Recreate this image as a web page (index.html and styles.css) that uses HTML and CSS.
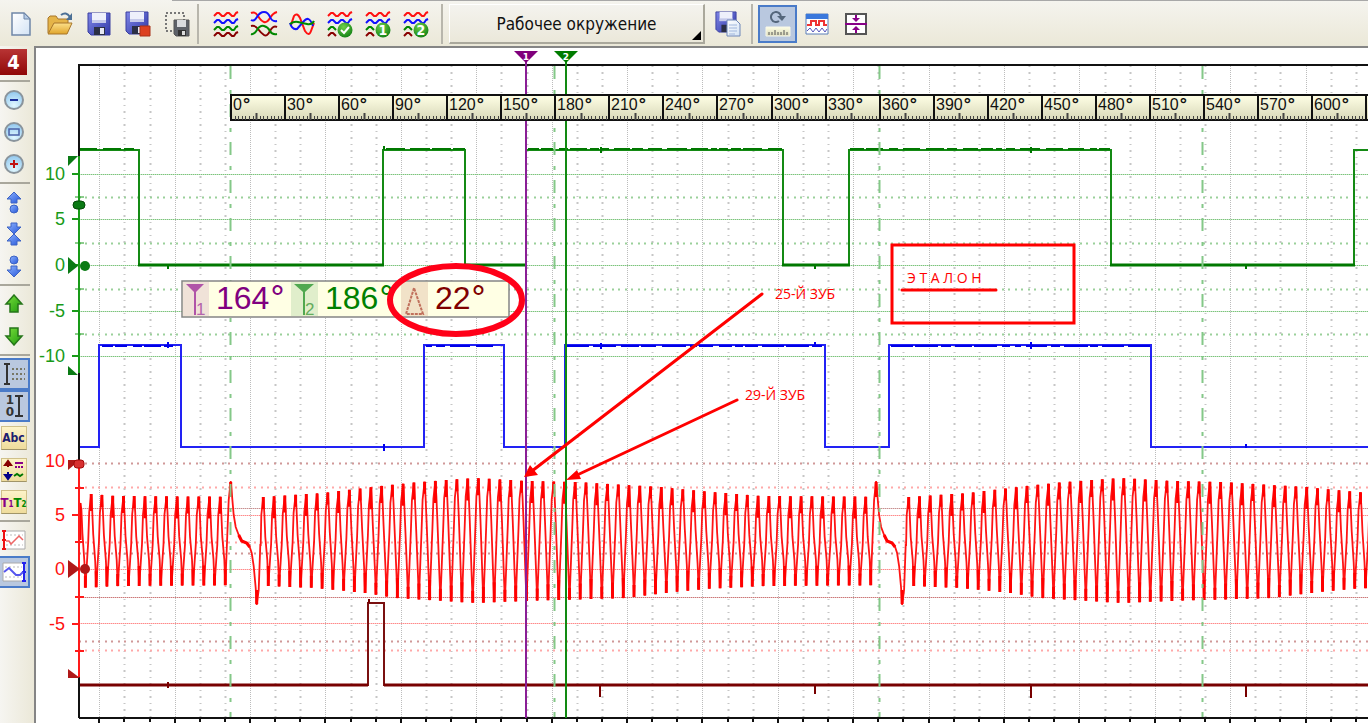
FILE: index.html
```html
<!DOCTYPE html>
<html lang="ru">
<head>
<meta charset="utf-8">
<title>Осциллограф</title>
<link rel="stylesheet" href="styles.css">
</head>
<body>
<svg class="defs" aria-hidden="true">
  <defs>
    <linearGradient id="disk" x1="0" y1="0" x2="1" y2="1"><stop offset="0" stop-color="#7f86e6"/><stop offset="1" stop-color="#3038a8"/></linearGradient>
    <linearGradient id="folder" x1="0" y1="0" x2="0" y2="1"><stop offset="0" stop-color="#fde08a"/><stop offset="1" stop-color="#e0a52c"/></linearGradient>
    <linearGradient id="page" x1="0" y1="0" x2="1" y2="1"><stop offset="0" stop-color="#fff"/><stop offset="1" stop-color="#d3e3f5"/></linearGradient>
    <linearGradient id="ruler" x1="0" y1="0" x2="0" y2="1"><stop offset="0" stop-color="#ffffe6"/><stop offset="1" stop-color="#d8d8b8"/></linearGradient>
    <radialGradient id="ball" cx=".4" cy=".3" r=".8"><stop offset="0" stop-color="#6fd04a"/><stop offset="1" stop-color="#0a7a10"/></radialGradient>
    <radialGradient id="glass" cx=".5" cy=".8" r=".8"><stop offset="0" stop-color="#e2f8ff"/><stop offset="1" stop-color="#8fc6ee"/></radialGradient>
    <linearGradient id="blueFill" x1="0" y1="0" x2="1" y2="1"><stop offset="0" stop-color="#8fb4ff"/><stop offset="1" stop-color="#2455d8"/></linearGradient>
    <linearGradient id="greenFill" x1="0" y1="0" x2="1" y2="1"><stop offset="0" stop-color="#7be03c"/><stop offset="1" stop-color="#1f9a10"/></linearGradient>
    <symbol id="floppy" viewBox="0 0 24 24">
      <path d="M1 1h22v22H4l-3-3z" fill="url(#disk)" stroke="#3a3fa0"/>
      <path d="M5 1h14v10H5z" fill="#eef0fb"/><path d="M5 8h14v3H5z" fill="#c5c9ea"/>
      <path d="M7 15h11v8H7z" fill="#2b2f45"/><path d="M13 16h4v6h-4z" fill="#e6e8f2"/>
    </symbol>
    <symbol id="w" viewBox="0 0 26 6"><path d="M1 5l3-3h2l3 3h2l3-3h2l3 3h2l2-3 2-1" fill="none" stroke="currentColor" stroke-width="2" stroke-linejoin="round"/></symbol>
    <symbol id="half" viewBox="0 0 26 6"><path d="M1 5l3-3h2l3 3" fill="none" stroke="currentColor" stroke-width="2" stroke-linejoin="round"/></symbol>
    <symbol id="rows" viewBox="0 0 26 28">
      <use href="#w" y="1" width="26" height="6" color="#f11"/><use href="#w" y="8" width="26" height="6" color="#11f"/>
      <use href="#half" y="15" width="26" height="6" color="#080"/><use href="#half" y="21" width="26" height="6" color="#800"/>
      <circle cx="18" cy="20" r="7.500" fill="url(#ball)"/>
    </symbol>
  </defs>
</svg>

<header class="toolbar">
  <div class="group group-file">
    <button class="tool" aria-label="Новый"><svg width="26" height="26" viewBox="0 0 26 26"><path d="M4 2h12l6 6v16H4z" fill="url(#page)" stroke="#6f87a8" stroke-width="1.500"/><path d="M16 2v6h6z" fill="#b5cbe6" stroke="#6f87a8"/></svg></button>
    <button class="tool" aria-label="Открыть"><svg width="28" height="26" viewBox="0 0 28 26"><path d="M2 22V7l2-2h6l2 3h10v4" fill="#e5b448" stroke="#a8762a"/><path d="M2 23l6-11h18l-5 11z" fill="url(#folder)" stroke="#a8762a"/><path d="M15 4q5-4 9 2" fill="none" stroke="#4c7096" stroke-width="2"/><path d="M26 2v7h-6z" fill="#4c7096"/></svg></button>
    <button class="tool" aria-label="Сохранить"><svg width="24" height="24"><use href="#floppy" width="24" height="24"/></svg></button>
    <button class="tool" aria-label="Сохранить и закрыть"><svg width="26" height="26"><use href="#floppy" width="24" height="24"/><path d="M15 15h10v10H15z" fill="#dc4020" stroke="#a83018"/></svg></button>
    <button class="tool" aria-label="Сохранить выделенное"><svg width="26" height="26" viewBox="0 0 26 26"><path d="M2 2h18v18H2z" fill="none" stroke="#777" stroke-width="2" stroke-dasharray="2 2"/><path d="M10 9h15v16H12l-2-2z" fill="#5d6168" stroke="#555"/><path d="M13 9h9v7h-9z" fill="#d9dbde"/><path d="M14 19h8v6h-8z" fill="#333"/><path d="M18 20h3v4h-3z" fill="#ddd"/></svg></button>
  </div>
  <div class="group group-waves">
    <button class="tool" aria-label="Раздельно"><svg width="26" height="28"><use href="#w" y="1" width="26" height="6" color="#f11"/><use href="#w" y="8" width="26" height="6" color="#11f"/><use href="#w" y="15" width="26" height="6" color="#080"/><use href="#w" y="21" width="26" height="6" color="#800"/></svg></button>
    <button class="tool" aria-label="Попарно"><svg width="28" height="28" viewBox="0 0 28 28" fill="none" stroke-width="2"><path d="M1 3q4-2 7 3t6 6 6-4 7-6" stroke="#f11"/><path d="M1 10q3 2 6-3t7-5 6 5 7 4" stroke="#11f"/><path d="M1 16q4-1 7 3t6 6 6-4 7-4" stroke="#800"/><path d="M1 24q3 1 6-4t7-4 6 5 7 3" stroke="#080"/></svg></button>
    <button class="tool" aria-label="Вместе"><svg width="26" height="26" viewBox="0 0 26 26" fill="none" stroke-width="2"><path d="M2 14l3-9q3-4 6 2l5 13q4 6 6 0l3-8" stroke="#f11"/><path d="M1 12q2 7 7 6l7-8q5-6 9 5" stroke="#11f"/><path d="M1 13q4-3 8-2t9 2 7-3" stroke="#080"/></svg></button>
    <button class="tool" aria-label="Применить"><svg width="26" height="28"><use href="#rows" width="26" height="28"/><path d="M14 20l3 3 5-6" fill="none" stroke="#fff" stroke-width="2"/></svg></button>
    <button class="tool" aria-label="Набор 1"><svg width="26" height="28"><use href="#rows" width="26" height="28"/><text class="ball-num" x="18" y="25">1</text></svg></button>
    <button class="tool" aria-label="Набор 2"><svg width="26" height="28"><use href="#rows" width="26" height="28"/><text class="ball-num" x="18" y="25">2</text></svg></button>
  </div>
  <label class="workspace"><select aria-label="Окружение"><option>Рабочее окружение</option></select></label>
  <div class="group group-save">
    <button class="tool" aria-label="Сохранить окружение"><svg width="28" height="28"><use href="#floppy" x="1" y="1" width="22" height="22"/><path d="M13 10h9l4 4v12H13z" fill="url(#page)" stroke="#6f87b8"/><path d="M15 15h8M15 18h8M15 21h8M15 24h6" stroke="#9fb6dc"/></svg></button>
  </div>
  <div class="group group-view">
    <button class="tool active" aria-pressed="true" aria-label="Линейка"><svg width="26" height="26" viewBox="0 0 26 26"><path d="M14 10A5 5 0 1 1 16 6" fill="none" stroke="#55677c" stroke-width="2"/><path d="M12 5h9l-4 5z" fill="#55677c"/><path d="M1 16h24v9H1z" fill="url(#ruler)" stroke="#f8f8e8"/><path d="M4 24v-3M7 24v-3M10 24v-5M13 24v-3M16 24v-3M19 24v-5M22 24v-3" stroke="#555"/></svg></button>
    <button class="tool" aria-label="Панель"><svg width="24" height="24" viewBox="0 0 24 24"><path d="M1 2h22v20H1z" fill="#fff" stroke="#5b7fb8"/><path d="M1 2h22v5H1z" fill="#3a78dc"/><path d="M2 13h4V9h5v4h3V9h5v4h3" fill="none" stroke="#e33" stroke-width="2"/><path d="M2 19l3-3 3 4 3-4 3 4 3-4 3 4 2-3" fill="none" stroke="#55b"/></svg></button>
    <button class="tool" aria-label="Сжать"><svg width="24" height="24" viewBox="0 0 24 24"><path d="M2 2h20v20H2z" fill="#fff" stroke="#555" stroke-width="2"/><path d="M1 12h22" stroke="#808" stroke-width="2"/><path d="M12 3v6M12 15v6" stroke="#808" stroke-width="2"/><path d="M8 6h8l-4 4zM8 18h8l-4-4z" fill="#808"/></svg></button>
  </div>
</header>

<main class="workspace-body">
  <nav class="side" aria-label="Инструменты">
    <button class="side-tool"><span class="channel">4</span></button>
    <hr>
    <button class="side-tool" aria-label="Уменьшить"><svg width="22" height="22" viewBox="0 0 22 22"><circle cx="11" cy="11" r="9" fill="url(#glass)" stroke="#8a949c" stroke-width="2"/><path d="M7 11h8" stroke="#1a2f9a" stroke-width="2"/></svg></button>
    <button class="side-tool" aria-label="По размеру"><svg width="22" height="22" viewBox="0 0 22 22"><circle cx="11" cy="11" r="9" fill="url(#glass)" stroke="#8a949c" stroke-width="2"/><path d="M6 8h10v6H6z" fill="none" stroke="#4a62a8" stroke-width="1.500"/></svg></button>
    <button class="side-tool" aria-label="Увеличить"><svg width="22" height="22" viewBox="0 0 22 22"><circle cx="11" cy="11" r="9" fill="url(#glass)" stroke="#8a949c" stroke-width="2"/><path d="M7 11h8M11 7v8" stroke="#c01414" stroke-width="2"/></svg></button>
    <hr>
    <button class="side-tool" aria-label="Вверх"><svg width="16" height="24" viewBox="0 0 16 24" fill="url(#blueFill)" stroke="#3c62c4"><path d="M8 2l7 7h-4v4H5V9H1z"/><circle cx="8" cy="19" r="4"/></svg></button>
    <button class="side-tool" aria-label="К центру"><svg width="16" height="24" viewBox="0 0 16 24" fill="url(#blueFill)" stroke="#3c62c4"><path d="M5 1h6v4h4l-7 7-7-7h4z"/><path d="M5 23h6v-4h4l-7-7-7 7h4z"/></svg></button>
    <button class="side-tool" aria-label="Вниз"><svg width="16" height="24" viewBox="0 0 16 24" fill="url(#blueFill)" stroke="#3c62c4"><path d="M8 23l7-7h-4v-4H5v4H1z"/><circle cx="8" cy="6" r="4"/></svg></button>
    <hr>
    <button class="side-tool" aria-label="Канал вверх"><svg width="20" height="20" viewBox="0 0 20 20"><path d="M10 1l8 9h-4v8H6v-8H2z" fill="url(#greenFill)" stroke="#26761a" stroke-width="1.500"/></svg></button>
    <button class="side-tool" aria-label="Канал вниз"><svg width="20" height="20" viewBox="0 0 20 20"><path d="M10 19l8-9h-4V2H6v8H2z" fill="url(#greenFill)" stroke="#26761a" stroke-width="1.500"/></svg></button>
    <hr>
    <button class="side-tool active" aria-pressed="true" aria-label="Сетка"><svg width="22" height="24" viewBox="0 0 22 24" fill="none"><path d="M1 2h6M1 22h6M4 2v20" stroke="#333" stroke-width="2"/><path d="M9 7h13M9 12h13M9 17h13" stroke="#776" stroke-width="2" stroke-dasharray="2 2"/></svg></button>
    <button class="side-tool active" aria-pressed="true" aria-label="Шкала"><svg width="20" height="24" viewBox="0 0 20 24"><path d="M11 2h8M11 22h8M15 2v20" stroke="#333" stroke-width="2"/><text class="scale-num" x="6" y="10">1</text><text class="scale-num" x="6" y="22">0</text></svg></button>
    <button class="side-tool"><span class="tile abc">Abc</span></button>
    <button class="side-tool" aria-label="Связь"><span class="tile"><svg width="22" height="22" viewBox="0 0 22 22"><path d="M5 2v6M2 6l3-4 3 4z" fill="#800" stroke="#800" stroke-width="2"/><path d="M5 13v6M2 16l3 4 3-4z" fill="#008" stroke="#008" stroke-width="2"/><path d="M12 4h8" stroke="#808" stroke-width="2"/><path d="M12 8h8" stroke="#808" stroke-width="2" stroke-dasharray="2 1"/><path d="M11 17l3-2 3 2 3-2" stroke="#070" stroke-width="2" fill="none"/></svg></span></button>
    <button class="side-tool"><span class="tile markers"><b>T<sub>1</sub></b><b>T<sub>2</sub></b></span></button>
    <hr>
    <button class="side-tool" aria-label="Левая шкала"><svg width="24" height="22" viewBox="0 0 24 22" fill="none"><path d="M2 2h21v18H2z" fill="#fff" stroke="#aaa"/><path d="M4 6h17M4 16h17" stroke="#bbb" stroke-dasharray="2 2"/><path d="M2 1v20M0 2h4M0 11h4M0 20h4" stroke="#e11" stroke-width="2"/><path d="M4 12h3l2 3 8-8 4 4" stroke="#e66" stroke-width="1.500"/></svg></button>
    <button class="side-tool active" aria-pressed="true" aria-label="Правая шкала"><svg width="24" height="22" viewBox="0 0 24 22" fill="none"><path d="M1 2h21v18H1z" fill="#fff" stroke="#aaa"/><path d="M3 6h17M3 16h17" stroke="#bbb" stroke-dasharray="2 2"/><path d="M22 1v20M20 2h4M20 11h4M20 20h4" stroke="#22e" stroke-width="2"/><path d="M2 11l5-4 7 7h4l3-3" stroke="#55e" stroke-width="2"/></svg></button>
  </nav>

  <section class="scope">
    <svg class="plot" role="img" aria-label="Осциллограмма">
      <g transform="translate(-36 -48)">
        <g id="grid"></g>
        <g id="traces"></g>
        <g id="frame"></g>
        <g id="cursors">
          <path d="M526 62V718" stroke="#8a1e96" stroke-width="2"/>
          <path d="M566 62V718" stroke="#128a12" stroke-width="2"/>
          <path d="M514 51h24l-12 12z" fill="#80007c"/><path d="M554 51h24l-12 12z" fill="#007c00"/>
          <text class="cursor-num" x="526" y="60">1</text><text class="cursor-num" x="566" y="60">2</text>
        </g>
        <g id="scale"></g>
        <g id="axes"></g>
        <g class="readout">
          <path d="M182 281H509V317H182z" fill="#ffffe4" stroke="#858585" stroke-width="1.500"/>
          <path d="M183 282h26v34h-26z" fill="#f0e2d8"/><path d="M291 282h27v34h-27z" fill="#e0eecb"/><path d="M401 282h27v34h-27z" fill="#f1e2c8"/>
          <path d="M186 284h18l-8 8v23h-2v-23z" fill="#b054a8"/><path d="M294 284h20l-9 8v23h-2v-23z" fill="#50a850"/>
          <path d="M414 288l-8 26h17z" fill="none" stroke="#c0705c" stroke-width="2" stroke-dasharray="3 1"/>
          <text class="sub" x="196" y="315" fill="#b464ac">1</text><text class="sub" x="305" y="315" fill="#64ac5c">2</text>
          <text class="val" x="216" y="309" fill="#800080">164<tspan>°</tspan></text><text class="val" x="325" y="309" fill="#008000">186<tspan>°</tspan></text><text class="val" x="435" y="309" fill="#800000">22<tspan>°</tspan></text>
        </g>
        <g fill="none" stroke="#f00" stroke-width="3" stroke-linecap="round">
          <ellipse cx="456" cy="300" rx="66" ry="34" stroke="#ff0018" stroke-width="6"/>
          <path d="M892 245H1074V323H892z"/><path d="M902 290H996"/>
          <path d="M762 294L532 471M737 400L575 476"/>
          <path d="M524 477l6-12 8 10zM566 480l11-10 4 9z" fill="#f00" stroke="none"/>
        </g>
        <g class="note"><text x="775" y="299">25-Й ЗУБ</text><text x="745" y="400">29-Й ЗУБ</text><text x="907" y="283" xml:space="preserve">Э Т А Л О Н</text></g>
      </g>
    </svg>
  </section>
</main>
<script src="plot.js"></script>
</body>
</html>
```

FILE: styles.css
```css
* { box-sizing: border-box; }

body {
  margin: 0;
  min-height: 100vh;
  display: flex;
  flex-direction: column;
  overflow: hidden;
  background: #ece9d8;
  font-family: "DejaVu Sans Condensed", "DejaVu Sans", sans-serif;
}

.defs { position: absolute; width: 0; height: 0; }

button {
  padding: 0;
  border: 0;
  background: none;
  font: inherit;
  display: flex;
  align-items: center;
  justify-content: center;
}

.toolbar {
  position: relative;
  display: flex;
  align-items: center;
  height: 46px;
  padding-top: 2px;
  background: linear-gradient(#f5f4ef, #ebe8d8);
}
.toolbar::before {
  content: "";
  position: absolute;
  top: 0;
  left: 172px;
  right: 0;
  height: 1px;
  background: #a8a8a8;
}

.group { display: flex; align-items: center; height: 40px; }
.group-file { padding: 0 1px; border-right: 2px solid #b8b6ac; }
.group-file .tool { width: 39px; }
.group-waves { padding: 0 6px 0 8px; border-right: 2px solid #b8b6ac; }
.group-save { padding: 0 4px; border-right: 2px solid #b8b6ac; }
.group-view { padding-left: 5px; }
.group-view .tool { width: 39px; }
.tool { width: 38px; height: 38px; }

.active { background: #b9c8df; border: 2px solid #4a7bc8; }

.workspace {
  position: relative;
  width: 256px;
  height: 40px;
  margin: 0 0 0 6px;
}
.workspace select {
  width: 100%;
  height: 100%;
  appearance: none;
  border: 1px solid #fff;
  border-right: 2px solid #aaa89c;
  border-bottom: 2px solid #aaa89c;
  border-radius: 0;
  background: linear-gradient(#f4f3ee, #ebe8da);
  font: 17px "DejaVu Sans Condensed", "DejaVu Sans", sans-serif;
  color: #111;
  text-align: center;
  text-align-last: center;
}
.workspace::after {
  content: "";
  position: absolute;
  right: 4px;
  bottom: 4px;
  border-left: 9px solid transparent;
  border-bottom: 9px solid #000;
}

.ball-num {
  font: bold 14px "DejaVu Sans Condensed", "DejaVu Sans", sans-serif;
  fill: #fff;
  text-anchor: middle;
}

.workspace-body { flex: 1; display: flex; min-height: 0; }

.side {
  width: 34px;
  padding: 0 4px 0 0;
  background: linear-gradient(90deg, #f6f5f1, #ebe8d8);
}
.side-tool { width: 30px; height: 32px; padding-right: 3px; }
.side-tool.active { border-left: 0; padding-right: 1px; }
.side hr { height: 2px; margin: 2px 0; border: 0; background: #a9a79c; }

.channel {
  width: 27px;
  height: 26px;
  line-height: 26px;
  background: linear-gradient(#b83434, #900808);
  color: #fff;
  font-size: 20px;
  font-weight: bold;
}
.scale-num { font: bold 12px "DejaVu Sans", sans-serif; fill: #333; text-anchor: middle; }

.tile {
  display: flex;
  align-items: center;
  justify-content: center;
  width: 26px;
  height: 24px;
  border: 1px solid #cfc08a;
  border-bottom-color: #a09468;
  background: linear-gradient(#fdf3c8, #efdc9c);
}
.abc { font-size: 12px; font-weight: bold; color: #1c2070; }
.markers { font: bold 13px "DejaVu Sans Condensed", sans-serif; color: #808; }
.markers b + b { color: #080; }
.markers sub { font-size: 8px; vertical-align: baseline; }

.scope {
  flex: 1;
  min-width: 0;
  display: flex;
  border-top: 2px solid #858585;
  border-left: 2px solid #858585;
  background: #fff;
}
.plot { flex: 1; min-width: 0; display: block; }

.axis-num { font: 18px "Liberation Sans", Arial, sans-serif; text-anchor: end; }
.deg { font: 16px "Liberation Sans", Arial, sans-serif; fill: #111; }
.deg tspan { font-size: 18px; font-weight: bold; }
.cursor-num { font: bold 9px "DejaVu Sans", sans-serif; fill: #fff; text-anchor: middle; }
.val { font: 32px "Liberation Sans", Arial, sans-serif; }
.val tspan { font-family: "DejaVu Sans", sans-serif; }
.sub { font: 17px "Liberation Sans", Arial, sans-serif; }
.note { font: 14px "Open Sans", "Noto Sans", sans-serif; fill: #f00; }
```

FILE: plot.js
```js
const RIGHT = Math.max(1368, window.innerWidth + 40);
const LEFT = 79;
const get = id => document.getElementById(id);

function path(d, stroke, width = 1, dash = '') {
  return `<path d="${d}" fill="none" stroke="${stroke}" stroke-width="${width}"${dash ? ` stroke-dasharray="${dash}"` : ''}/>`;
}

// Grid
const FINE = '1 1', COARSE = '2 4 2 5';
let grid = '', ticks = '';
for (let i = 0, x; (x = Math.round(99.3 + i * 25.13)) < RIGHT; i++) {
  const major = i % 3 === 0;
  grid += path(`M${x + .5} 66V718`, major ? '#bcbcbc' : '#c6c6c6', major ? 1 : 2, major ? FINE : '1 5 2 5');
  ticks += path(`M${x} 718V${major ? 724 : 722}`, '#111', 2);
}
const rows = [
  [174, '#7cc47c', 1], [197, '#9ad09a', 0], [219, '#7cc47c', 1], [243, '#9ad09a', 0],
  [265, '#7cc47c', 1], [289, '#9ad09a', 0], [311, '#7cc47c', 1], [334, '#9ad09a', 0], [356, '#7cc47c', 1],
  [463, '#d09898', 0], [487, '#ffa8a8', 0], [508, '#c89090', 1], [515, '#ff8a8a', 1], [542, '#ffa8a8', 0],
  [553, '#d09898', 0], [569, '#ff8a8a', 1], [597, '#cc7878', 1], [623, '#ff8a8a', 1],
  [641, '#d09898', 0], [650, '#ffa8a8', 0]
];
for (const [y, c, fine] of rows) {
  if (fine) grid += `<g opacity=".45">${path(`M${LEFT} ${y + .5}H${RIGHT}`, c, 1)}</g>`;
  grid += path(`M${LEFT} ${y + .5}H${RIGHT}`, c, fine ? 1 : 2, fine ? FINE : COARSE);
}
get('grid').innerHTML = grid;

// Rectangular traces: start level, then [x, level] transitions
function steps(start, list) {
  let d = `M${LEFT + 1} ${start}`;
  for (const [x, y] of list) d += `H${x}V${y}`;
  return d + `H${RIGHT}`;
}
function flats(start, list, thickLevel) {
  let d = '', x0 = LEFT + 1, y0 = start;
  for (const [x, y] of [...list, [RIGHT, 0]]) {
    if (y0 === thickLevel) d += `M${x0 - 1} ${y0}H${x + 1}`;
    x0 = x; y0 = y;
  }
  return d;
}
// Small deterministic noise along a flat section
function noise(from, to, y, seed) {
  let d = '', s = seed;
  for (let x = from; x < to - 8;) {
    s = (s * 73 + 41) % 211;
    const len = 6 + s % 19;
    d += `M${x} ${y}h${Math.min(len, to - x)}`;
    x += len + 2 + s % 5;
  }
  return d;
}
const green = [[139, 265], [383, 150], [465, 265], [526, 150], [783, 265], [849, 150], [1111, 265], [1354, 150]];
const blue = [[99, 345], [181, 447], [424, 345], [504, 447], [565, 345], [825, 447], [889, 345], [1151, 447]];
const brown = [[368, 603], [384, 685]];

let t = '';
t += path(steps(150, green), '#148a14', 2) + path(flats(150, green, 265), '#007800', 3);
t += path(noise(80, 139, 149, 3) + noise(386, 465, 149, 8) + noise(528, 782, 149, 5) + noise(850, 1110, 149, 9), '#007800', 2);
t += path('M384 150v-4M168 265v4M601 147v6M815 265v4M1031 147v6M1246 265v4', '#007800', 2);
t += path(steps(447, blue), '#2222f4', 2);
t += path(noise(102, 181, 346, 5) + noise(426, 503, 346, 6) + noise(567, 824, 346, 2) + noise(891, 1150, 346, 7), '#0000e8', 2);
t += path('M168 342v6M601 343v6M815 342v4M1031 342v7M384 444v7M1246 444v4', '#0000f0', 2);
t += path(steps(685, brown), '#7a1010', 2);
t += path('M80 685H368M384 685H' + RIGHT, '#780000', 3);
t += path('M168 682v6M369 603v-4M600 685v12M815 685v9M1031 685v13M1246 685v12', '#780000', 2);

// Crankshaft sensor trace, one revolution = 60 tooth pitches with 2 missing
const REV = 645.4, PITCH = REV / 60, SYNC = 230.7, FIRST = 263.3;
const TOP = [[0, 497], [60, 493], [117, 486], [157, 482], [212, 478], [263, 481], [312, 482], [397, 487], [437, 491], [497, 496], [REV, 497]];
const BOTTOM = [[0, 586], [47, 588], [97, 593], [127, 598], [207, 603], [257, 601], [357, 598], [397, 593], [437, 589], [497, 586], [REV, 585]];
function level(table, x) {
  const p = ((x - FIRST) % REV + REV) % REV;
  for (let i = 1; i < table.length; i++) {
    if (p <= table[i][0]) {
      const [a, b] = [table[i - 1], table[i]];
      return a[1] + (b[1] - a[1]) * (p - a[0]) / (b[0] - a[0]);
    }
  }
  return table[0][1];
}
const pts = [[80, 503]];
let caps = '';
const GAP = [[-2, 500], [0, 481], [1, 492], [3, 515], [5, 527], [8, 535], [11, 541], [16, 543], [19, 547], [21, 553], [23, 566], [25, 588], [26, 605], [28, 590], [30, 545]];
for (let r = -1; r < 3; r++) {
  const base = FIRST + r * REV;
  for (let k = 0; k < 57; k++) {
    const x = base + k * PITCH;
    if (x < 77 || x > RIGHT) continue;
    const hi = level(TOP, x), lo = level(BOTTOM, x);
    if (x > 84) {
      pts.push([x - 3, hi + 48], [x - 2, hi + 18], [x, hi]);
      caps += `M${x.toFixed(1)} ${hi.toFixed(1)}v${[12, 22, 17][k % 3]}`;
    }
    pts.push([x + 1, hi + 16], [x + 2, hi + 40], [x + 4, lo - 26], [x + 5, lo]);
    if (x > 78) caps += `M${(x + 5).toFixed(1)} ${lo.toFixed(1)}v-${[20, 12, 16][k % 3]}`;
  }
  const s = SYNC + (r + 1) * REV;
  if (s < RIGHT) {
    for (const [dx, y] of GAP) pts.push([s + dx, y]);
    caps += `M${s} 482v15M${s + 26} 604v-14`;
    caps += `M${s + 8} 535l3 6 5 2 3 4`;
  }
}
pts.sort((a, b) => a[0] - b[0]);
t += path('M' + pts.map(p => p[0].toFixed(1) + ' ' + p[1].toFixed(1)).join('L'), '#ff1414', 1.8) + path(caps, '#f00', 3);
t += path('M566 483V552', '#a04000', 1);
t += path('M80 503V540', '#f00', 3);
[230.5, 554.5, 879.5, 1202.5].forEach(x => { t += path(`M${x} 66V718`, '#84c888', 2, '13 11 4 10'); });
get('traces').innerHTML = t;

// Frame and bottom ticks
get('frame').innerHTML = path(`M${LEFT} 718V65H${RIGHT}M${LEFT} 718H${RIGHT}`, '#111', 2) + ticks;

// Degree ruler
let s = `<path d="M231 95H${RIGHT}V120H231z" fill="url(#ruler)" stroke="#111" stroke-width="2"/>`;
for (let i = 0, x; (x = 231 + i * 54.05) < RIGHT; i++) {
  const rx = Math.round(x);
  s += path(`M${rx} 95V120`, '#111', 2);
  for (let j = 1; j < 15; j++) {
    const mid = j === 7;
    s += path(`M${Math.round(x + j * 3.6) + .5} 120v-${mid ? 7 : 4}`, '#444', mid ? 2 : 1);
  }
  if (rx < window.innerWidth - 38) s += `<text class="deg" x="${rx + 2}" y="110">${i * 30}<tspan dx="1">°</tspan></text>`;
}
get('scale').innerHTML = s;

// Value axes
let a = path('M79 156V373', '#189a18', 2) + path('M79 462V677', '#ff1a1a', 2);
[[10, 174], [5, 219], [0, 265], [-5, 311], [-10, 356]].forEach(([v, y]) => {
  a += path(`M72 ${y}H79`, '#189a18', 2) + `<text class="axis-num" x="65" y="${y + 6}" fill="#189a18">${v}</text>`;
});
[197, 243, 289, 334].forEach(y => { a += path(`M75 ${y}H84`, '#189a18', 1); });
[[10, 461], [5, 515], [0, 569], [-5, 624]].forEach(([v, y]) => {
  a += path(`M72 ${y}H79`, '#ff1a1a', 2) + `<text class="axis-num" x="65" y="${y + 6}" fill="#f11">${v}</text>`;
});
[488, 542, 597, 651].forEach(y => { a += path(`M75 ${y}H84`, '#ff1a1a', 2); });
a += '<g fill="#0a7a14"><path d="M68 156h10l-10 10z"/><path d="M68 366v9h10z"/><path d="M68 257v17l10-8z"/><circle cx="85" cy="266" r="5"/><rect x="73" y="201" width="12" height="8" rx="4" stroke="#044a08"/></g>';
a += '<g fill="#b01818"><path d="M68 460h12l-12 10z"/><path d="M68 669v9h12z"/><path d="M68 560v18l12-9z"/><circle cx="85" cy="569" r="5"/><rect x="74" y="460" width="10" height="8" rx="3" fill="#d83030" stroke="#a00808"/></g>';
get('axes').innerHTML = a;
```
